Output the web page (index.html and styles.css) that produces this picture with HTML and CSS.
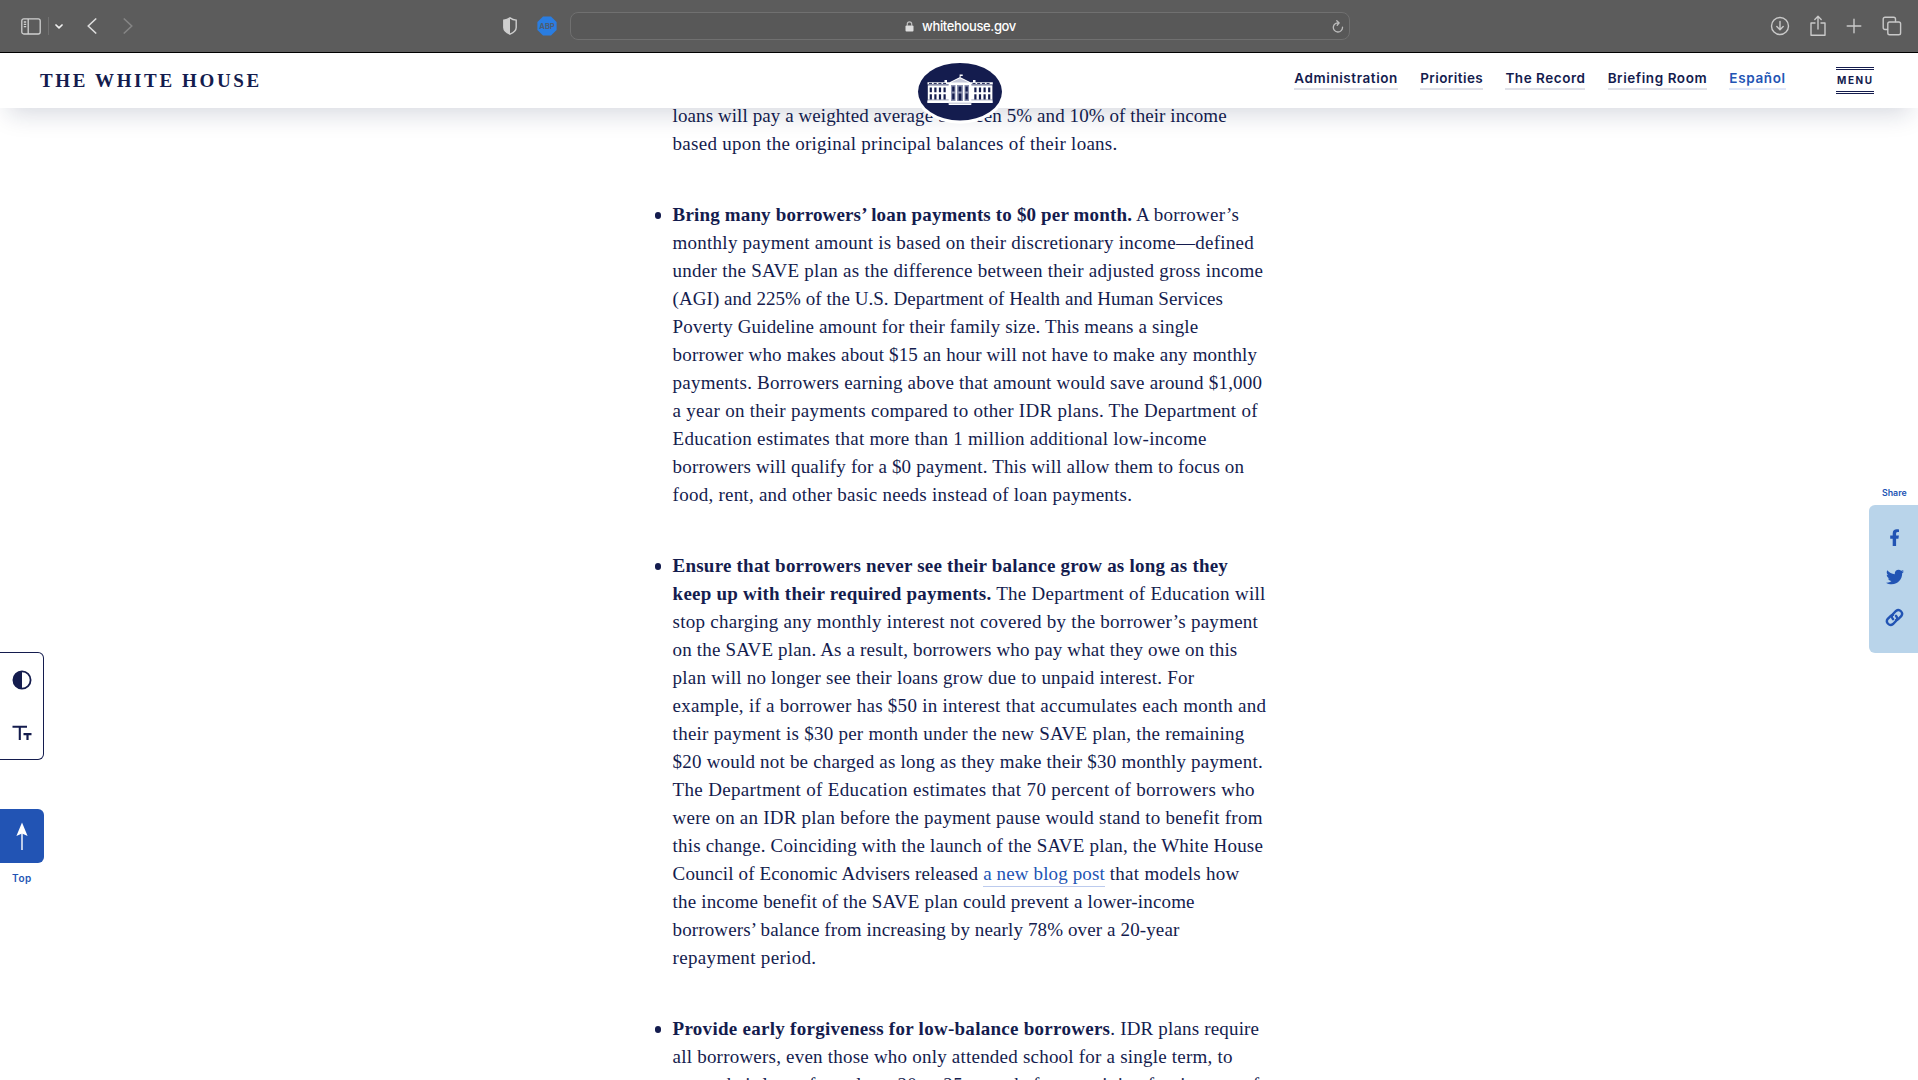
FILE: index.html
```
<!DOCTYPE html>
<html lang="en">
<head>
<meta charset="utf-8">
<title>The White House</title>
<link rel="stylesheet" href="styles.css">
</head>
<body>
<div class="toolbar">
  <div class="tools-left">
    <svg class="sidebar-icon" width="20" height="17" viewBox="0 0 20 17" fill="none" stroke="#cfd0d0" stroke-width="1.3"><rect x=".8" y=".8" width="18.4" height="15.2" rx="2"/><path d="M7.2 1v15M2.8 4h2.4M2.8 6.3h2.4M2.8 8.6h2.4"/></svg>
    <span class="divider"></span>
    <svg class="chevron" width="8" height="5" viewBox="0 0 8 5" fill="none" stroke="#f0f0f0" stroke-width="1.7" stroke-linecap="round" stroke-linejoin="round"><path d="M1 1l3 2.8L7 1"/></svg>
    <svg class="back" width="10" height="16" viewBox="0 0 10 16" fill="none" stroke="#dcdcdc" stroke-width="1.7" stroke-linecap="round" stroke-linejoin="round"><path d="M8.7 1L1.2 8l7.5 7"/></svg>
    <svg class="forward" width="10" height="16" viewBox="0 0 10 16" fill="none" stroke="#858585" stroke-width="1.7" stroke-linecap="round" stroke-linejoin="round"><path d="M1.3 1l7.5 7-7.5 7"/></svg>
  </div>
  <div class="tools-mid">
    <svg class="shield" width="14" height="18" viewBox="0 0 14 18"><path d="M7 .9C5 2.4 3 3 .8 3.1v7.4c0 3 2.6 5 6.2 6.7 3.6-1.7 6.2-3.7 6.2-6.7V3.1C11 3 9 2.4 7 .9z" fill="none" stroke="#cfcfcf" stroke-width="1.4"/><path d="M7 .9C5 2.4 3 3 .8 3.1v7.4c0 3 2.6 5 6.2 6.7z" fill="#cfcfcf"/></svg>
    <svg class="abp" width="20" height="20" viewBox="0 0 20 20"><path d="M6 .4h8L19.6 6v8L14 19.6H6L.4 14V6z" fill="#2a7de1"/><text x="10" y="12.7" text-anchor="middle" textLength="15.5" lengthAdjust="spacingAndGlyphs">ABP</text></svg>
  </div>
  <div class="address">
    <span class="address-text">
      <svg width="9" height="11" viewBox="0 0 9 11"><rect x=".5" y="4.6" width="8" height="6" rx="1" fill="#dedede"/><path d="M2.3 5V3a2.2 2.2 0 0 1 4.4 0v2" fill="none" stroke="#bdbdbd" stroke-width="1.2"/></svg>
      <span class="host">whitehouse.gov</span>
    </span>
    <svg class="reload" width="12" height="13" viewBox="0 0 12 13" fill="none" stroke="#bcbcbc" stroke-width="1.3" stroke-linecap="round" stroke-linejoin="round"><path d="M10.5 7.2A4.6 4.6 0 1 1 6.8 2.9M4.800.8l2.4 2.1-2 2.3"/></svg>
  </div>
  <div class="tools-right">
    <svg width="20" height="20" viewBox="0 0 20 20"><circle cx="10" cy="10" r="8.5"/><path d="M10 5.5v8M6.8 10.5l3.2 3.2 3.2-3.2"/></svg>
    <svg width="16" height="22" viewBox="0 0 16 22"><path d="M5 8H1v12.3h14V8h-4M8 14V1.5M4.800 4.5L8 1.3l3.2 3.2"/></svg>
    <svg width="16" height="16" viewBox="0 0 16 16"><path d="M8 1.2v13.6M1.2 8h13.6"/></svg>
    <svg width="20" height="20" viewBox="0 0 20 20"><rect x="5.800" y="6" width="12.800" height="12.800" rx="1.8"/><path d="M5.5 13.5H3a1.8 1.8 0 0 1-1.8-1.8V3A1.8 1.8 0 0 1 3 1.2h8.7A1.8 1.8 0 0 1 13.5 3v2.5"/></svg>
  </div>
</div>

<header class="site-header">
  <span class="brand">THE WHITE HOUSE</span>
  <nav class="nav">
    <a class="n-admin">Administration</a><a class="n-prio">Priorities</a><a class="n-rec">The Record</a><a class="n-brief">Briefing Room</a><a class="n-es">Español</a>
    <span class="menu">MENU</span>
  </nav>
  <svg class="logo" width="90" height="66" viewBox="0 0 90 66">
    <ellipse cx="45" cy="33.7" rx="45" ry="32" fill="#fff"/>
    <ellipse cx="45" cy="33.7" rx="42" ry="28.8" fill="#141c4e"/>
    <g fill="#fff">
      <path d="M12.5 24.3h65.3v2.2H12.5zM12.8 27.3h64.6V45H12.8zM34 24.5L45 19l11 5.5zM33.7 25h22.6v20H33.7zM12.3 42.5h65.4v2.4H12.3zM33.7 45h22.6v2H33.7zM44.6 16.5h1v3h-1zM45.5 16.5h2.2v1.5h-2.2zM29.5 22h2.5v2.5h-2.5zM58 22h2.5v2.5H58z"/>
    </g>
    <path d="M14 25.4h18.5M57.5 25.4H76" stroke="#141c4e" stroke-width="1" stroke-dasharray="3 1.7"/>
    <path d="M13 27h20M57 27h20" stroke="#8b90ae" stroke-width=".6"/>
    <path d="M36 24.6L45 20.3l9 4.3z" fill="#c5c8d9"/>
    <g stroke="#141c4e" stroke-width="2.2" stroke-dasharray="4.8 2 5.6 20">
      <path d="M15.8 29.4v14M20.4 29.4v14M25 29.4v14M29.6 29.4v14M60.4 29.4v14M65 29.4v14M69.6 29.4v14M74.2 29.4v14"/>
    </g>
    <path d="M13 41.9h20.7M56.3 41.9H77" stroke="#8b90ae" stroke-width=".8"/>
    <g fill="#8b90ae"><path d="M36 27h4.5v16H36zM42 27h6v16h-6zM49.5 27H54v16h-4.5z"/></g>
    <g fill="#141c4e"><path d="M37.2 28.5h2.3v5h-2.3zM37.2 35.5h2.3v6h-2.3zM43.6 28.5h2.8v5h-2.8zM43.6 35.5h2.8v7h-2.8zM50.5 28.5h2.3v5h-2.3zM50.5 35.5h2.3v6h-2.3z"/></g>
    <path d="M33.7 45.2h22.6" stroke="#8b90ae" stroke-width=".6"/>
  </svg>
</header>

<main class="article">
  <ul class="points">
    <li class="continued">
      <span class="line t08">loans will pay a weighted average between 5% and 10% of their income</span>
      <span class="line t25">based upon the original principal balances of their loans.</span>
    </li>
    <li>
      <span class="line t21"><b class="t15">Bring many borrowers’ loan payments to $0 per month.</b> A borrower’s</span>
      <span class="line t24">monthly payment amount is based on their discretionary income—defined</span>
      <span class="line t25">under the SAVE plan as the difference between their adjusted gross income</span>
      <span class="line t04">(AGI) and 225% of the U.S. Department of Health and Human Services</span>
      <span class="line t15">Poverty Guideline amount for their family size. This means a single</span>
      <span class="line t17">borrower who makes about $15 an hour will not have to make any monthly</span>
      <span class="line t21">payments. Borrowers earning above that amount would save around $1,000</span>
      <span class="line t27">a year on their payments compared to other IDR plans. The Department of</span>
      <span class="line t25">Education estimates that more than 1 million additional low-income</span>
      <span class="line t15">borrowers will qualify for a $0 payment. This will allow them to focus on</span>
      <span class="line t24">food, rent, and other basic needs instead of loan payments.</span>
    </li>
    <li>
      <span class="line"><b class="t21">Ensure that borrowers never see their balance grow as long as they</b></span>
      <span class="line t27"><b class="t22">keep up with their required payments.</b> The Department of Education will</span>
      <span class="line t25">stop charging any monthly interest not covered by the borrower’s payment</span>
      <span class="line t15">on the SAVE plan. As a result, borrowers who pay what they owe on this</span>
      <span class="line t22">plan will no longer see their loans grow due to unpaid interest. For</span>
      <span class="line t27">example, if a borrower has $50 in interest that accumulates each month and</span>
      <span class="line t25">their payment is $30 per month under the new SAVE plan, the remaining</span>
      <span class="line t20">$20 would not be charged as long as they make their $30 monthly payment.</span>
      <span class="line t32">The Department of Education estimates that 70 percent of borrowers who</span>
      <span class="line t22">were on an IDR plan before the payment pause would stand to benefit from</span>
      <span class="line t19">this change. Coinciding with the launch of the SAVE plan, the White House</span>
      <span class="line t13">Council of Economic Advisers released <a class="link">a new blog post</a> <span class="t27">that models how</span></span>
      <span class="line t17">the income benefit of the SAVE plan could prevent a lower-income</span>
      <span class="line t12">borrowers’ balance from increasing by nearly 78% over a 20-year</span>
      <span class="line t32">repayment period.</span>
    </li>
    <li>
      <span class="line t17"><b class="t27">Provide early forgiveness for low-balance borrowers</b>. IDR plans require</span>
      <span class="line t21">all borrowers, even those who only attended school for a single term, to</span>
      <span class="line t27">repay their loans for at least 20 or 25 years before receiving forgiveness of</span>
    </li>
  </ul>
</main>

<aside class="left-rail">
  <div class="display-tools">
    <svg width="20" height="20" viewBox="0 0 20 20"><circle cx="10" cy="10" r="8.6" fill="none" stroke="#141c4e" stroke-width="1.8"/><path d="M10 1.4a8.6 8.6 0 0 0 0 17.2z" fill="#141c4e"/></svg>
    <svg width="20" height="16" viewBox="0 0 20 16" fill="none" stroke="#141c4e"><path d="M.5 1.7h14.5M7.8 1.7V15" stroke-width="2.1"/><path d="M11.5 9.2h8M15.5 9.2V15" stroke-width="2.2"/></svg>
  </div>
  <div class="to-top">
    <svg width="12" height="29" viewBox="0 0 12 29"><path d="M6 .5L11.6 14 6 11.6.4 14z" fill="#fff"/><path d="M6 10v18" stroke="#fff" stroke-width="1.4"/></svg>
  </div>
  <span class="top-label">Top</span>
</aside>

<aside class="share">
  <span class="share-label">Share</span>
  <div class="share-box">
    <svg width="10" height="17" viewBox="0 0 10 17" fill="#2254b4"><path d="M2.7 17V9.7H.2V6.6h2.5V4.4C2.7 1.7 4.3.3 6.7.3c1.1 0 2.3.2 2.3.2v2.6H7.7c-1.3 0-1.6.8-1.6 1.6v1.9h2.8l-.5 3.1H6.1V17z"/></svg>
    <svg width="18" height="16" viewBox="0 0 512 430" fill="#2254b4"><path d="M459.4 110.7c.3 4.5.3 9.1.3 13.6 0 138.7-105.6 298.6-298.6 298.6-59.5 0-114.7-17.2-161.1-47.1 8.4 1 16.6 1.3 25.3 1.3 49.1 0 94.2-16.6 130.3-44.8-46.1-1-84.8-31.2-98.1-72.8 6.5 1 13 1.6 19.8 1.6 9.4 0 18.8-1.3 27.6-3.6-48.1-9.7-84.1-52-84.1-103v-1.3c14 7.8 30.2 12.7 47.4 13.3-28.3-18.8-46.8-51-46.8-87.4 0-19.5 5.2-37.4 14.3-53 51.7 63.7 129.3 105.3 216.4 109.8-1.6-7.8-2.6-15.9-2.6-24 0-57.8 46.8-104.9 104.9-104.9 30.2 0 57.5 12.7 76.7 33.1 23.7-4.5 46.5-13.3 66.6-25.3-7.8 24.4-24.4 44.8-46.1 57.8 21.1-2.3 41.6-8.1 60.4-16.2-14.3 20.8-32.2 39.3-52.6 54.3z"/></svg>
    <svg width="19" height="19" viewBox="0 0 19 19" fill="none" stroke="#2254b4" stroke-width="2.4" stroke-linecap="round"><path d="M8 11.2a3.7 3.7 0 0 1 0-5.2l3-3a3.7 3.7 0 0 1 5.2 5.2l-3 3a3.7 3.7 0 0 1-2.2 1"/><path d="M11 7.8a3.7 3.7 0 0 1 0 5.2l-3 3a3.7 3.7 0 0 1-5.2-5.2l3-3a3.7 3.7 0 0 1 2.2-1"/></svg>
  </div>
</aside>
</body>
</html>
```
FILE: styles.css
```
* { box-sizing: border-box; }
html, body { height: 100%; }
body {
  margin: 0;
  position: relative;
  overflow: hidden;
  background: #fff;
  color: #141c4e;
  font-family: "Liberation Serif", serif;
}
svg { display: block; flex: none; }

/* Browser toolbar */
.toolbar {
  position: relative;
  z-index: 3;
  display: flex;
  height: 53px;
  background: #5c5c5c;
  border-bottom: 1px solid #000;
  font-family: Inter, sans-serif;
}
.tools-left { display: flex; align-items: center; width: 503px; padding-left: 21px; }
.divider { width: 1px; height: 18px; margin: 0 6px 0 7px; background: #717171; }
.back { margin-left: 24px; }
.forward { margin-left: 26px; }
.tools-mid { display: flex; align-items: center; gap: 20px; width: 67px; }
.abp text { font: 700 8px Inter, sans-serif; fill: #4d5d73; }
.address {
  display: flex;
  align-items: center;
  width: 780px;
  height: 28px;
  margin-top: 12px;
  padding-right: 5px;
  background: #585858;
  border: 1px solid #707070;
  border-radius: 8px;
}
.address-text { display: flex; align-items: center; gap: 8px; flex: 1; padding-left: 334px; }
.host { font-size: 13px; font-weight: 500; line-height: 16px; letter-spacing: -0.36px; color: #fff; }
.tools-right { display: flex; align-items: center; margin-left: auto; padding-right: 16px; }
.tools-right svg { fill: none; stroke: #c9c9c9; stroke-width: 1.4; stroke-linecap: round; stroke-linejoin: round; }
.tools-right svg + svg { margin-left: 20px; }

/* Site header */
.site-header {
  position: relative;
  z-index: 2;
  display: flex;
  justify-content: space-between;
  height: 55px;
  padding: 0 44px 0 40px;
  background: #fff;
  box-shadow: 0 14px 24px -8px rgba(20, 32, 70, .17);
}
.brand { padding-top: 17px; font-size: 19px; line-height: 22px; font-weight: 700; letter-spacing: 2.63px; }
.nav { display: flex; align-items: flex-start; gap: 22.2px; font-family: Inter, sans-serif; }
.nav a {
  margin-top: 16px;
  padding-bottom: 1px;
  border-bottom: 2px solid #e0e1e8;
  font-size: 13.5px;
  font-weight: 600;
  line-height: 18px;
  white-space: nowrap;
}
.n-admin { letter-spacing: .58px; }
.n-prio { letter-spacing: .44px; }
.n-rec { letter-spacing: .53px; }
.n-brief { letter-spacing: .57px; }
.nav .n-es { letter-spacing: .65px; color: #2254b4; border-color: #e2e8f8; }
.menu {
  width: 38px;
  height: 27px;
  margin: 14px 0 0 28px;
  padding-left: 1px;
  border-top: 3px double #141c4e;
  border-bottom: 3px double #141c4e;
  font-size: 10px;
  font-weight: 700;
  line-height: 21px;
  letter-spacing: 1.6px;
  white-space: nowrap;
}
.logo { position: absolute; left: 915px; top: 5px; }

/* Article copy */
.article { width: 640px; margin: -6px 0 0 640px; }
.points { margin: 0; padding: 0 0 0 32.6px; list-style: none; }
.points li { position: relative; margin-bottom: 43px; font-size: 19px; line-height: 28px; }
.points li:not(.continued)::before {
  content: "";
  position: absolute;
  left: -18px;
  top: 11px;
  width: 6.5px;
  height: 6.5px;
  border-radius: 50%;
  background: #141c4e;
}
.line { display: block; white-space: nowrap; }
.link { color: #2254b4; padding-bottom: 2px; border-bottom: 1px solid #bccbee; }

/* Tracking steps that keep each line at its set measure */
.t04 { letter-spacing: .05px; }
.t08 { letter-spacing: .08px; }
.t12 { letter-spacing: .12px; }
.t13 { letter-spacing: .132px; }
.t15 { letter-spacing: .158px; }
.t17 { letter-spacing: .173px; }
.t19 { letter-spacing: .19px; }
.t20 { letter-spacing: .2px; }
.t21 { letter-spacing: .215px; }
.t22 { letter-spacing: .23px; }
.t24 { letter-spacing: .243px; }
.t25 { letter-spacing: .257px; }
.t27 { letter-spacing: .274px; }
.t32 { letter-spacing: .33px; }

/* Accessibility tools and scroll-to-top, docked left */
.left-rail { position: absolute; left: 0; top: 652px; width: 44px; font-family: Inter, sans-serif; }
.display-tools {
  display: flex;
  flex-direction: column;
  align-items: center;
  gap: 35px;
  height: 108px;
  padding: 16.5px 0 0;
  background: #fff;
  border: 1px solid #141c4e;
  border-left: 0;
  border-radius: 0 6px 6px 0;
}
.to-top {
  display: flex;
  justify-content: center;
  height: 54px;
  margin-top: 49px;
  padding-top: 13px;
  background: #2254b4;
  border-radius: 0 6px 6px 0;
}
.top-label { display: block; margin-top: 9px; font-size: 10px; font-weight: 600; line-height: 13px; letter-spacing: .55px; text-align: center; color: #2254b4; }

/* Share panel, docked right */
.share { position: absolute; right: 0; top: 486px; width: 49px; font-family: Inter, sans-serif; }
.share-label { display: block; height: 18.5px; padding-left: 13px; font-size: 8.8px; font-weight: 600; line-height: 13px; color: #2254b4; }
.share-box {
  display: flex;
  flex-direction: column;
  align-items: center;
  height: 148px;
  padding: 24px 0 0 2px;
  background: #b9d4ea;
  border-radius: 6px 0 0 6px;
}
.share-box svg + svg { margin-top: 23px; }
```
